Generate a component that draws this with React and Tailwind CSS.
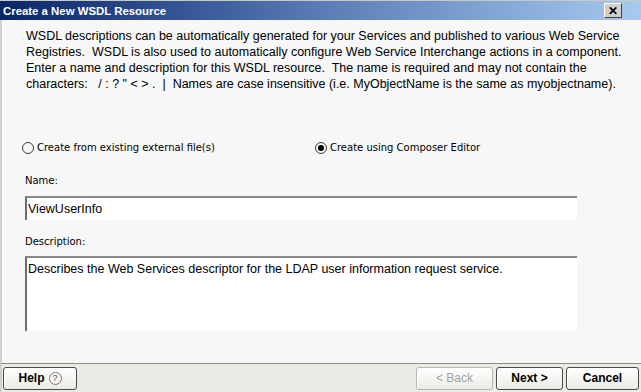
import React from "react";

function Radio({ checked, label }) {
  return (
    <div className="flex items-center gap-[3px]">
      <span className="w-[12px] h-[12px] rounded-full border border-[#3a3a3a] bg-[#f7f7f7] flex items-center justify-center">
        {checked && <span className="w-[6px] h-[6px] rounded-full bg-black" />}
      </span>
      <span className="text-[10px] text-black font-['DejaVu_Sans',sans-serif] leading-[14px] whitespace-nowrap">{label}</span>
    </div>
  );
}

function Btn({ children, disabled, className = "" }) {
  return (
    <div
      className={
        "h-[23px] rounded-[3px] border flex items-center justify-center bg-gradient-to-b from-[#ffffff] to-[#ecebe6] shadow-[inset_1px_1px_0_#ffffff] font-['Liberation_Sans',Arial,sans-serif] font-bold text-[12px] " +
        (disabled ? "border-[#b8b8b0] text-[#a3a3a3] font-normal " : "border-[#4a4a48] text-black ") +
        className
      }
    >
      {children}
    </div>
  );
}

export default function App() {
  return (
    <div className="w-[641px] h-[392px] flex flex-col overflow-hidden bg-[#f7f7f7]">
      {/* Title bar */}
      <div className="h-[20px] shrink-0 flex items-center justify-between bg-gradient-to-r from-[#0a246a] via-[#5a7cb6] to-[#a6caf0] border-t border-[#c8c8c8] pl-[3px] pr-[19px]">
        <span className="text-white font-bold text-[11.4px] font-['Liberation_Sans',Arial,sans-serif] leading-[18px]">
          Create a New WSDL Resource
        </span>
        <span className="w-[18px] h-[15px] bg-[#d4d0c8] border border-t-white border-l-white border-r-[#404040] border-b-[#404040] flex items-center justify-center text-black text-[12px] font-bold leading-none font-['Liberation_Sans',Arial,sans-serif]">
          ✕
        </span>
      </div>

      {/* Body */}
      <div className="flex-1 flex flex-col border-l-[2px] border-[#d4d0c8] pl-[23px] pt-[8px]">
        <p className="text-[12.5px] leading-[16px] text-black font-['Liberation_Sans',Arial,sans-serif] pl-[1px] whitespace-nowrap">
          WSDL descriptions can be automatically generated for your Services and published to various Web Service
          <br />
          Registries.&nbsp; WSDL is also used to automatically configure Web Service Interchange actions in a component.
          <br />
          Enter a name and description for this WSDL resource.&nbsp; The name is required and may not contain the
          <br />
          characters:&nbsp; &nbsp;/ : ? " &lt; &gt; .&nbsp; |&nbsp; Names are case insensitive (i.e. MyObjectName is the same as myobjectname).
        </p>

        <div className="mt-[49px] flex items-center">
          <div className="w-[293px] -ml-[3px]">
            <Radio label="Create from existing external file(s)" />
          </div>
          <Radio checked label="Create using Composer Editor" />
        </div>

        <div className="mt-[19px] text-[10px] leading-[14px] font-['DejaVu_Sans',sans-serif] text-black">Name:</div>
        <div className="mt-[8px] w-[552px] h-[24px] bg-white border-t-2 border-l-2 border-t-[#8a8a8a] border-l-[#6e6e6e] flex items-center pl-[1px] text-[12.5px] font-['Liberation_Sans',Arial,sans-serif] text-black">
          ViewUserInfo
        </div>

        <div className="mt-[15px] text-[10px] leading-[14px] font-['DejaVu_Sans',sans-serif] text-black">Description:</div>
        <div className="mt-[7px] w-[552px] h-[75px] bg-white border-t-2 border-l-2 border-t-[#8a8a8a] border-l-[#6e6e6e] pl-[1px] pt-[3px] text-[12.5px] leading-[16px] font-['Liberation_Sans',Arial,sans-serif] text-black">
          Describes the Web Services descriptor for the LDAP user information request service.
        </div>
      </div>

      {/* Footer */}
      <div className="h-[29px] shrink-0 bg-[#ebeae4] border-t border-[#8c8c88] border-l-[2px] border-l-[#d4d0c8] flex items-center justify-between pl-[1px] pr-[2px]">
        <Btn className="w-[74px] gap-[4px]">
          <span>Help</span>
          <span className="w-[13px] h-[13px] rounded-full border border-[#777] flex items-center justify-center text-[9px] font-normal text-[#555] leading-none">?</span>
        </Btn>
        <div className="flex gap-[3px]">
          <Btn disabled className="w-[77px]">&lt; Back</Btn>
          <Btn className="w-[67px]">Next &gt;</Btn>
          <Btn className="w-[73px]">Cancel</Btn>
        </div>
      </div>
    </div>
  );
}
